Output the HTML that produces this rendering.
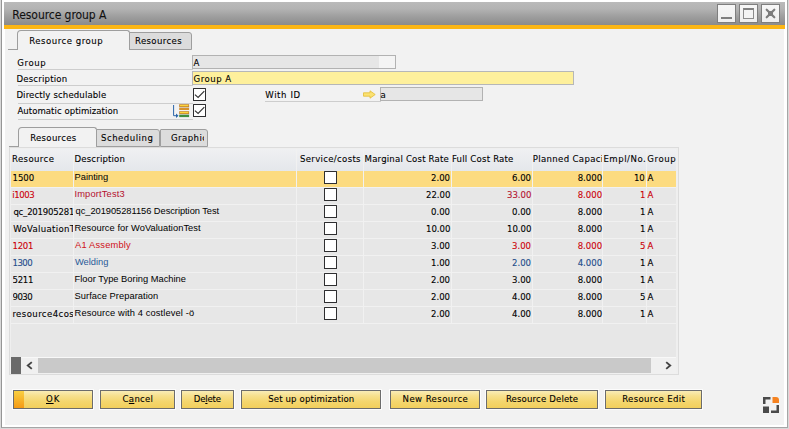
<!DOCTYPE html>
<html><head><meta charset="utf-8"><title>Resource group A</title>
<style>
html,body{margin:0;padding:0;}
body{width:789px;height:429px;position:relative;overflow:hidden;background:#d9d9d9;color:#000;font-family:"DejaVu Sans Condensed","Liberation Sans",sans-serif;font-size:9.5px;}
div,span,svg{position:absolute;box-sizing:border-box;}span{white-space:nowrap;-webkit-text-stroke:0.1px;}.xA{-webkit-text-stroke:0;}
.xT{font-family:"DejaVu Sans Condensed","Liberation Sans",sans-serif;font-size:9.5px;line-height:12px;height:12px;}.xA{font-family:"Liberation Sans",sans-serif;font-size:9.3px;line-height:12px;height:12px;}.xH{font-family:"DejaVu Sans Condensed","Liberation Sans",sans-serif;font-size:12px;line-height:12px;height:12px;}
#frame{left:1px;top:-2px;width:787px;height:430px;background:#fff;border:1px solid #a6a6a6;border-left-color:#969696;}
#content{left:5px;top:29px;width:779px;height:396px;background:#f2f2f2;}
#title{left:4px;top:2px;width:781px;height:23px;background:linear-gradient(#bababa 0%,#b3b3b3 30%,#9f9f9f 62%,#8b8b8b 100%);}
#orange{left:4px;top:25px;width:781px;height:4px;background:#fbb615;}
.wb{top:4px;width:19px;height:19px;border:1px solid #7e7e7e;background:linear-gradient(#f6f6f6,#eeeeee);}
.tab{background:#dcdcdc;border:1px solid #9e9e9e;border-radius:1px 3px 0 0;}
.tabA{background:#f2f2f2;border:1px solid #9e9e9e;border-bottom:none;border-radius:4px 3px 0 0;}
.ln{background:#9e9e9e;height:1px;}
.ul{background:#cdcdcd;height:1px;}
.fld{border:1px solid #b2b2b2;height:14px;}
.cb{width:13px;height:13px;border:1px solid #2e2e30;background:#fff;border-radius:0.5px;}
.btn{top:390px;height:19px;border:1px solid #6c6c6c;background:linear-gradient(#f9ecb6 0%,#f7e08e 28%,#f4d66e 62%,#f2cf5c 100%);box-shadow:0 0 0 1px rgba(255,255,255,.75);}
#tbl{left:9px;top:147px;width:670px;height:228px;background:#efefef;border:1px solid #dcdcdc;}#cells{left:11px;top:150px;width:665px;height:224px;background:#e7e7e7;}
.hd{left:11px;top:149px;width:665px;height:22px;background:linear-gradient(#eff0f2,#e4e7eb);}
.hl{left:11px;width:665px;height:16px;background:#fcdb80;}
.hs{left:11px;width:665px;height:1px;background:#f1f1f1;}
.vs{top:149px;width:1px;height:175px;background:#f1f1f1;}
u{text-decoration:underline;text-underline-offset:1px;}
</style></head><body>
<div id="frame"></div><div id="content"></div><div id="title"></div><div id="orange"></div>
<div class="wb" style="left:717px"><div style="left:3px;top:12px;width:11px;height:2px;background:#7e7e7e"></div></div>
<div class="wb" style="left:739px"><div style="left:3px;top:3px;width:11px;height:11px;border:1px solid #8c8c8c;border-top:2px solid #808080;background:#f4f4f4"></div></div>
<div class="wb" style="left:761px"><svg width="17" height="17" style="left:0;top:0"><path d="M4.7 4.7 L12.3 12.3 M12.3 4.7 L4.7 12.3" stroke="#7c7c7c" stroke-width="2.2" stroke-linecap="round"/><rect x="6" y="6" width="5" height="5" fill="#7c7c7c"/></svg></div>
<div class="ln" style="left:8px;top:49px;width:10px"></div>
<div class="tabA" style="left:17px;top:30px;width:113px;height:20px"></div>
<div class="tab" style="left:129px;top:32px;width:63px;height:18px"></div>
<div class="ul" style="left:18px;top:69px;width:175px"></div>
<div class="ul" style="left:18px;top:85px;width:175px"></div>
<div class="ul" style="left:18px;top:103px;width:175px"></div>
<div class="ul" style="left:18px;top:119px;width:175px"></div>
<div class="fld" style="left:192px;top:55px;width:204px;background:linear-gradient(90deg,#e6e6e6 0,#e6e6e6 186px,#f4f4f4 186px)"></div>
<div class="fld" style="left:192px;top:71px;width:382px;background:#fef09c;border-color:#b6b7b8"></div>
<div class="cb" style="left:193px;top:88px"><svg width="11" height="11" style="left:0;top:0"><path d="M0.9 5.6 L4.1 8.4 L10.3 2.1" stroke="#333" stroke-width="1.2" fill="none"/></svg></div>
<div class="cb" style="left:193px;top:104px"><svg width="11" height="11" style="left:0;top:0"><path d="M0.9 5.6 L4.1 8.4 L10.3 2.1" stroke="#333" stroke-width="1.2" fill="none"/></svg></div>
<svg width="17" height="15" style="left:173px;top:104px"><path d="M0.6 1 V11.7 H3.4" stroke="#2a64a8" stroke-width="1" fill="none"/><path d="M3 9.4 L5.5 11.7 L3 14Z" fill="#2a64a8"/><rect x="6.2" y="0.2" width="9.9" height="2.8" fill="#c4862e"/><rect x="7" y="0.9" width="8.3" height="1.3" fill="#fcd53a"/><rect x="6.2" y="3" width="9.9" height="0.8" fill="#d0c8c0"/><rect x="6.2" y="3.8" width="9.9" height="2.2" fill="#d8932c"/><rect x="6.2" y="7.2" width="9.9" height="2.8" fill="#c4862e"/><rect x="7" y="7.9" width="8.3" height="1.3" fill="#fcd53a"/><rect x="6.2" y="10" width="9.9" height="0.8" fill="#c8c8c0"/><rect x="6.2" y="10.8" width="9.9" height="2.3" fill="#3f8f3f"/></svg>
<div class="ul" style="left:265px;top:101px;width:116px"></div>
<svg width="13" height="9" style="left:363px;top:90px"><path d="M0.5 2.8 H7 V0.8 L12.2 4.5 L7 8.2 V6.2 H0.5Z" fill="#fbe272" stroke="#e2bd36" stroke-width="0.8"/></svg>
<div class="fld" style="left:380px;top:87px;width:103px;background:#e6e6e6"></div>
<div class="ln" style="left:9px;top:146px;width:10px"></div>
<div class="tabA" style="left:18px;top:127px;width:79px;height:20px"></div>
<div class="tab" style="left:96px;top:129px;width:64px;height:18px"></div>
<div class="tab" style="left:160px;top:129px;width:48px;height:18px"></div>
<div id="tbl"></div><div id="cells"></div><div class="hd"></div>
<div class="hl" style="top:171px"></div>
<div class="hs" style="top:187px"></div>
<div class="hs" style="top:204px"></div>
<div class="hs" style="top:221px"></div>
<div class="hs" style="top:238px"></div>
<div class="hs" style="top:255px"></div>
<div class="hs" style="top:272px"></div>
<div class="hs" style="top:289px"></div>
<div class="hs" style="top:306px"></div>
<div class="hs" style="top:323px"></div>
<div class="vs" style="left:73px"></div>
<div class="vs" style="left:296px"></div>
<div class="vs" style="left:363px"></div>
<div class="vs" style="left:451px"></div>
<div class="vs" style="left:532px"></div>
<div class="vs" style="left:602px"></div>
<div class="vs" style="left:646px"></div>
<div class="cb" style="left:324px;top:171px"></div>
<div class="cb" style="left:324px;top:188px"></div>
<div class="cb" style="left:324px;top:205px"></div>
<div class="cb" style="left:324px;top:222px"></div>
<div class="cb" style="left:324px;top:239px"></div>
<div class="cb" style="left:324px;top:256px"></div>
<div class="cb" style="left:324px;top:273px"></div>
<div class="cb" style="left:324px;top:290px"></div>
<div class="cb" style="left:324px;top:307px"></div>
<div style="left:11px;top:357px;width:665px;height:17px;background:#f0f0f0;border-top:1px solid #f8f8f8"></div>
<div style="left:11px;top:357px;width:10px;height:17px;background:#6a6a6a"></div>
<div style="left:38px;top:358px;width:613px;height:15px;background:#c9c9c9"></div>
<svg width="8" height="9" style="left:26px;top:361px"><path d="M5.8 1.1 L1.8 4.5 L5.8 7.9" stroke="#444" stroke-width="1.9" fill="none"/></svg>
<svg width="8" height="9" style="left:664px;top:361px"><path d="M2.2 1.1 L6.2 4.5 L2.2 7.9" stroke="#444" stroke-width="1.9" fill="none"/></svg>
<div class="btn" style="left:13px;width:80px"><div style="left:0;top:0;width:10px;height:17px;background:linear-gradient(#f9cf42,#f59a14)"></div></div>
<div class="btn" style="left:100px;width:75px"></div>
<div class="btn" style="left:181px;width:53px"></div>
<div class="btn" style="left:241px;width:140px"></div>
<div class="btn" style="left:390px;width:90px"></div>
<div class="btn" style="left:486px;width:112px"></div>
<div class="btn" style="left:605px;width:97px"></div>
<svg width="16" height="16" style="left:763px;top:397px"><path d="M0 0 H7.5 V2.5 H2.5 V7 H0Z" fill="#4a4a4a"/><path d="M9.5 0 H13 A3 3 0 0 1 16 3 V6 H9.5Z" fill="#f58220"/><rect x="0" y="9.5" width="6" height="6.5" fill="#4a4a4a"/><path d="M16 8 V16 H8 V13.5 H13.5 V8Z" fill="#4a4a4a"/></svg>
<span class="xH" style="color:#101010;left:12.30px;top:9px;letter-spacing:-0.060px">Resource group A</span>
<span class="xT" style="left:29.20px;top:35px;letter-spacing:0.523px">Resource group</span>
<span class="xT" style="left:135.00px;top:35px;letter-spacing:0.375px">Resources</span>
<span class="xT" style="left:17.20px;top:57px;letter-spacing:0.650px">Group</span>
<span class="xT" style="left:16.40px;top:73px;letter-spacing:0.210px">Description</span>
<span class="xT" style="left:16.40px;top:89px;letter-spacing:0.142px">Directly schedulable</span>
<span class="xT" style="left:17.40px;top:105px;letter-spacing:0.048px">Automatic optimization</span>
<span class="xT" style="left:193.60px;top:57px">A</span>
<span class="xT" style="left:193.60px;top:73px;letter-spacing:0.500px">Group A</span>
<span class="xT" style="left:265.30px;top:89px;letter-spacing:0.600px">With ID</span>
<span class="xT" style="left:380.50px;top:89px">a</span>
<span class="xT" style="left:30.20px;top:132px;letter-spacing:0.312px">Resources</span>
<span class="xT" style="left:101.00px;top:132px;letter-spacing:0.511px">Scheduling</span>
<span class="xT" style="left:171.00px;top:132px;letter-spacing:0.440px;width:32.60px;overflow:hidden">Graphic</span>
<span class="xT" style="left:12.00px;top:153px;letter-spacing:0.400px">Resource</span>
<span class="xT" style="left:74.60px;top:153px;letter-spacing:0.160px">Description</span>
<span class="xT" style="left:300.00px;top:153px;letter-spacing:0.325px">Service/costs</span>
<span class="xT" style="left:364.60px;top:153px;letter-spacing:0.200px">Marginal Cost Rate</span>
<span class="xT" style="left:452.00px;top:153px;letter-spacing:0.215px">Full Cost Rate</span>
<span class="xT" style="left:532.70px;top:153px;letter-spacing:0.354px;width:69.30px;overflow:hidden">Planned Capacity</span>
<span class="xT" style="left:603.40px;top:153px;letter-spacing:0.543px">Empl/No.</span>
<span class="xT" style="left:647.30px;top:153px;letter-spacing:0.600px">Group</span>
<span class="xT" style="left:12.50px;top:172px;width:60.50px;overflow:hidden">1500</span>
<span class="xA" style="left:74.60px;top:171px">Painting</span>
<span class="xT" style="left:431.00px;top:172px">2.00</span>
<span class="xT" style="left:512.00px;top:172px">6.00</span>
<span class="xT" style="left:577.70px;top:172px">8.000</span>
<span class="xT" style="left:633.90px;top:172px">10</span>
<span class="xT" style="left:647.60px;top:172px">A</span>
<span class="xT" style="color:#cc0008;left:12.20px;top:189px;letter-spacing:-0.375px;width:60.80px;overflow:hidden">i1003</span>
<span class="xA" style="color:#b4102e;left:74.40px;top:188px;letter-spacing:0.170px">ImportTest3</span>
<span class="xT" style="left:426.00px;top:189px">22.00</span>
<span class="xT" style="color:#b4102e;left:507.00px;top:189px">33.00</span>
<span class="xT" style="color:#cc0008;left:577.70px;top:189px">8.000</span>
<span class="xT" style="color:#cc0008;left:639.90px;top:189px">1</span>
<span class="xT" style="color:#cc0008;left:647.60px;top:189px">A</span>
<span class="xT" style="left:13.40px;top:206px;letter-spacing:-0.218px;width:59.60px;overflow:hidden">qc_201905281156</span>
<span class="xA" style="left:75.60px;top:205px;letter-spacing:-0.042px">qc_201905281156 Description Test</span>
<span class="xT" style="left:431.00px;top:206px">0.00</span>
<span class="xT" style="left:512.00px;top:206px">0.00</span>
<span class="xT" style="left:577.70px;top:206px">8.000</span>
<span class="xT" style="left:639.90px;top:206px">1</span>
<span class="xT" style="left:647.60px;top:206px">A</span>
<span class="xT" style="left:13.20px;top:223px;letter-spacing:0.340px;width:59.80px;overflow:hidden">WoValuationTest</span>
<span class="xA" style="left:74.60px;top:222px;letter-spacing:0.048px">Resource for WoValuationTest</span>
<span class="xT" style="left:426.00px;top:223px">10.00</span>
<span class="xT" style="left:507.00px;top:223px">10.00</span>
<span class="xT" style="left:577.70px;top:223px">8.000</span>
<span class="xT" style="left:639.90px;top:223px">1</span>
<span class="xT" style="left:647.60px;top:223px">A</span>
<span class="xT" style="color:#cc0008;left:12.50px;top:240px;letter-spacing:-0.267px;width:60.50px;overflow:hidden">1201</span>
<span class="xA" style="color:#d01018;left:75.00px;top:239px;letter-spacing:0.200px">A1 Assembly</span>
<span class="xT" style="left:431.00px;top:240px">3.00</span>
<span class="xT" style="color:#cc0008;left:512.00px;top:240px">3.00</span>
<span class="xT" style="color:#cc0008;left:577.70px;top:240px">8.000</span>
<span class="xT" style="color:#cc0008;left:639.90px;top:240px">5</span>
<span class="xT" style="color:#cc0008;left:647.60px;top:240px">A</span>
<span class="xT" style="color:#1d4c8a;left:12.50px;top:257px;letter-spacing:-0.533px;width:60.50px;overflow:hidden">1300</span>
<span class="xA" style="color:#2a5a98;left:75.00px;top:256px">Welding</span>
<span class="xT" style="left:431.00px;top:257px">1.00</span>
<span class="xT" style="color:#1d4c8a;left:512.00px;top:257px">2.00</span>
<span class="xT" style="color:#1d4c8a;left:577.70px;top:257px">4.000</span>
<span class="xT" style="left:639.90px;top:257px">1</span>
<span class="xT" style="left:647.60px;top:257px">A</span>
<span class="xT" style="left:12.50px;top:274px;letter-spacing:-0.267px;width:60.50px;overflow:hidden">5211</span>
<span class="xA" style="left:74.60px;top:273px;letter-spacing:0.017px">Floor Type Boring Machine</span>
<span class="xT" style="left:431.00px;top:274px">2.00</span>
<span class="xT" style="left:512.00px;top:274px">3.00</span>
<span class="xT" style="left:577.70px;top:274px">8.000</span>
<span class="xT" style="left:639.90px;top:274px">1</span>
<span class="xT" style="left:647.60px;top:274px">A</span>
<span class="xT" style="left:12.50px;top:291px;letter-spacing:-0.533px;width:60.50px;overflow:hidden">9030</span>
<span class="xA" style="left:74.60px;top:290px;letter-spacing:0.050px">Surface Preparation</span>
<span class="xT" style="left:431.00px;top:291px">2.00</span>
<span class="xT" style="left:512.00px;top:291px">4.00</span>
<span class="xT" style="left:577.70px;top:291px">8.000</span>
<span class="xT" style="left:639.90px;top:291px">5</span>
<span class="xT" style="left:647.60px;top:291px">A</span>
<span class="xT" style="left:12.40px;top:308px;letter-spacing:0.418px;width:60.60px;overflow:hidden">resource4costlevel</span>
<span class="xA" style="left:74.60px;top:307px;letter-spacing:0.122px">Resource with 4 costlevel -ö</span>
<span class="xT" style="left:431.00px;top:308px">2.00</span>
<span class="xT" style="left:512.00px;top:308px">4.00</span>
<span class="xT" style="left:577.70px;top:308px">8.000</span>
<span class="xT" style="left:639.90px;top:308px">1</span>
<span class="xT" style="left:647.60px;top:308px">A</span>
<span class="xT" style="left:46.00px;top:393px;letter-spacing:0.900px"><u>O</u>K</span>
<span class="xT" style="left:122.60px;top:393px;letter-spacing:0.280px">C<u>a</u>ncel</span>
<span class="xT" style="left:193.80px;top:393px;letter-spacing:-0.180px">De<u>l</u>ete</span>
<span class="xT" style="left:268.20px;top:393px;letter-spacing:0.144px">Set up optimization</span>
<span class="xT" style="left:402.60px;top:393px;letter-spacing:0.427px">New Resource</span>
<span class="xT" style="left:505.90px;top:393px;letter-spacing:0.164px">Resource Delete</span>
<span class="xT" style="left:622.20px;top:393px;letter-spacing:0.350px">Resource Edit</span>
</body></html>
